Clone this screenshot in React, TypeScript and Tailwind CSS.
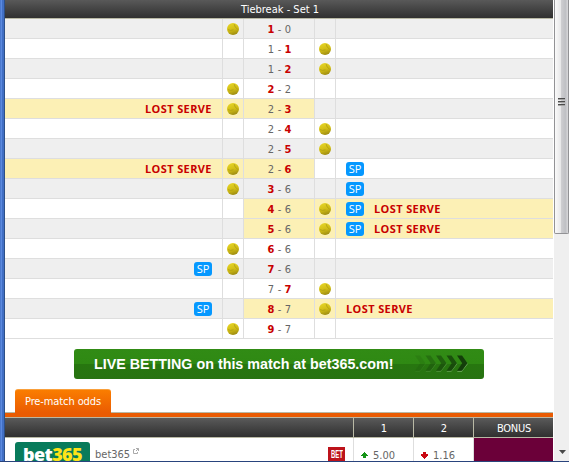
import React from 'react';
import { clsx } from 'clsx';

type Side = 'home' | 'away';

interface Point {
  home: number;
  away: number;
  winner: Side;
  server: Side;
  lost?: boolean;
  sp?: Side;
}

const points: Point[] = [
  { home: 1, away: 0, winner: 'home', server: 'home' },
  { home: 1, away: 1, winner: 'away', server: 'away' },
  { home: 1, away: 2, winner: 'away', server: 'away' },
  { home: 2, away: 2, winner: 'home', server: 'home' },
  { home: 2, away: 3, winner: 'away', server: 'home', lost: true },
  { home: 2, away: 4, winner: 'away', server: 'away' },
  { home: 2, away: 5, winner: 'away', server: 'away' },
  { home: 2, away: 6, winner: 'away', server: 'home', lost: true, sp: 'away' },
  { home: 3, away: 6, winner: 'home', server: 'home', sp: 'away' },
  { home: 4, away: 6, winner: 'home', server: 'away', lost: true, sp: 'away' },
  { home: 5, away: 6, winner: 'home', server: 'away', lost: true, sp: 'away' },
  { home: 6, away: 6, winner: 'home', server: 'home' },
  { home: 7, away: 6, winner: 'home', server: 'home', sp: 'home' },
  { home: 7, away: 7, winner: 'away', server: 'away' },
  { home: 8, away: 7, winner: 'home', server: 'away', lost: true, sp: 'home' },
  { home: 9, away: 7, winner: 'home', server: 'home' },
];

const Ball = () => (
  <svg width="12" height="12" viewBox="0 0 12 12">
    <defs>
      <linearGradient id="ball" x1="0.3" y1="0" x2="0.6" y2="1">
        <stop offset="0" stopColor="#e6d526" />
        <stop offset="0.55" stopColor="#d0bc14" />
        <stop offset="1" stopColor="#9b8a12" />
      </linearGradient>
    </defs>
    <circle cx="6" cy="6" r="6" fill="url(#ball)" />
    <path d="M7.2 1.2Q7.5 4 10.8 6.5M1 6.7Q3.5 8 6.5 6.8" fill="none" stroke="#ab9a16" strokeWidth="0.8" />
  </svg>
);

const SetPoint = () => (
  <span className="h-[14px] w-[18px] rounded-[3px] bg-[#0598ff] text-center font-['Open_Sans',sans-serif] text-[11px] font-medium leading-[14px] text-white [font-stretch:normal]">
    SP
  </span>
);

const LostServe = () => (
  <span className="w-[67px] whitespace-nowrap font-['Open_Sans',sans-serif] text-[11px] font-bold leading-[18px] tracking-[0.38px] text-[#c80000] [font-stretch:normal]">
    LOST SERVE
  </span>
);

const Score = ({ value, won }: { value: number; won: boolean }) => (
  <span className={clsx('w-[7px] text-center', won ? 'font-bold text-[#c80000]' : 'text-[#666]')}>{value}</span>
);

const PointRow = ({ point, odd }: { point: Point; odd: boolean }) => {
  const { home, away, winner, server, lost, sp } = point;
  const homeLost = lost && server === 'home';
  const awayLost = lost && server === 'away';
  const base = odd ? 'bg-[#efefef]' : 'bg-white';
  const cell = 'flex h-5 items-center border-b border-[#dedede] leading-[18px]';
  const hl = 'bg-[#fcf0b5]';

  return (
    <div className="grid grid-cols-[218px_21px_71px_21px_217px]">
      <div className={clsx(cell, 'justify-end border-r pr-[10px] pt-px', homeLost ? hl : base)}>
        {sp === 'home' && <SetPoint />}
        {homeLost && <LostServe />}
      </div>
      <div className={clsx(cell, 'border-r pl-1 pt-px', homeLost ? hl : base)}>{server === 'home' && <Ball />}</div>
      <div className={clsx(cell, 'justify-center gap-[3px] border-r pl-px pt-[3px]', lost ? hl : base)}>
        <Score value={home} won={winner === 'home'} />
        <span className="w-1 text-center text-[#666]">-</span>
        <Score value={away} won={winner === 'away'} />
      </div>
      <div className={clsx(cell, 'border-r pl-1 pt-px', awayLost ? hl : base)}>{server === 'away' && <Ball />}</div>
      <div className={clsx(cell, 'gap-[10px] pl-[10px] pt-px', awayLost ? hl : base)}>
        {sp === 'away' && <SetPoint />}
        {awayLost && <LostServe />}
      </div>
    </div>
  );
};

const Chevrons = () => (
  <svg width="54" height="18" viewBox="0 0 54 18">
    {[0.12, 0.3, 0.5, 0.7, 0.92].map((opacity, i) => (
      <g key={opacity} transform={`translate(${i * 10.5} 0)`} opacity={opacity}>
        <path d="M0 16.8H4.8L10.8 9L9.8 7.7L3.9 15.8H0.8Z" fill="#7bb568" />
        <path d="M0 0.5H5L10.5 8.2L5 15.8H0L5.2 8.2Z" fill="#12390a" />
      </g>
    ))}
  </svg>
);

const BetBanner = () => (
  <div className="ml-[69px] mt-[10px] flex h-[30px] w-[410px] items-center rounded-[3px] bg-[linear-gradient(#318b15_0,#2f8913_50%,#27760f_50%,#287312_100%)] pl-5">
    <span className="w-[321px] whitespace-nowrap pt-px font-['Liberation_Sans',Arial,sans-serif] text-[14.3px] font-bold text-white">
      LIVE BETTING on this match at bet365.com!
    </span>
    <Chevrons />
  </div>
);

const Arrow = ({ up }: { up?: boolean }) => (
  <svg width="7" height="7" viewBox="0 0 7 7" shapeRendering="crispEdges">
    <path
      d={up ? 'M3 0H4V1H5V2H6V3H7V4H5V6H2V4H0V3H1V2H2V1H3Z' : 'M2 0H5V2H7V4H6V5H5V6H4V7H3V6H2V5H1V4H0V2H2Z'}
      fill={up ? '#159417' : '#c90812'}
    />
  </svg>
);

const PreMatchOdds = () => (
  <div className="mt-[10px]">
    <div className="flex h-6 border-b border-[#b9b9a5]">
      <div className="ml-[10px] h-6 w-24 shrink-0 rounded-t-[3px] border-t border-[#f9a03c] bg-linear-to-b from-[#fa7d00] to-[#ea5b02] text-center text-[11px] leading-[23px] tracking-[-0.1px] text-white">
        Pre-match odds
      </div>
    </div>
    <div className="h-[5px] border-b border-[#bdb6a0] bg-[#ea5b02]" />
    <div className="grid h-5 grid-cols-[348px_60px_60px_80px] border-b border-[#b9b9a5] bg-linear-to-b from-[#5a5a5a] to-[#303030] text-[11px] leading-[21px] text-white">
      <div />
      <div className="border-l border-[#b9b9a5] pl-px text-center">1</div>
      <div className="border-l border-[#b9b9a5] pl-px text-center">2</div>
      <div className="border-l border-[#b9b9a5] pl-px text-center tracking-[-0.3px]">BONUS</div>
    </div>
    <div className="grid h-[34px] grid-cols-[348px_60px_60px_80px] text-[11px] text-[#666]">
      <div className="flex items-start pl-[10px] pt-1">
        <div className="flex h-[25px] w-[75px] justify-center rounded-[3px] bg-[#087b5b] pt-[2px] font-['Open_Sans',sans-serif] text-[18px] font-extrabold leading-5 tracking-[-0.6px] text-white [font-stretch:normal]">
          bet<span className="text-[#ffe418]">365</span>
        </div>
        <span className="ml-[5px] mt-[5px] leading-4">bet365</span>
        <svg className="ml-[3px] mt-[6px]" width="6" height="6" viewBox="0 0 6 6" fill="none" stroke="#aaa">
          <path d="M2 1.5H.5V5.5H4.5V4M3 .5H5.5V3M5.5 .5L3 3" />
        </svg>
        <div className="ml-auto mr-2 mt-[5px] flex h-[18px] w-[17px] justify-center bg-[#bd131b] text-[10px] leading-[16px] text-white">
          <span className="scale-x-[0.6] font-['Liberation_Sans',sans-serif] font-bold">BET</span>
        </div>
      </div>
      <div className="flex h-[34px] items-center gap-[5px] border-l border-[#dedede] pl-[7px]">
        <Arrow up />
        <span className="pt-[2px]">5.00</span>
      </div>
      <div className="flex h-[34px] items-center gap-[5px] border-l border-[#dedede] pl-[7px]">
        <Arrow />
        <span className="pt-[2px]">1.16</span>
      </div>
      <div className="border-l border-[#dedede] bg-[#6b0039]" />
    </div>
  </div>
);

const ScrollBar = () => (
  <div className="ml-px flex w-[15px] flex-col justify-between bg-[#efefef]">
    <div className="flex h-[234px] flex-col items-center rounded-b-[2px] border-x border-b border-[#929295] bg-[linear-gradient(90deg,#fafafa_0,#e7e7e8_45%,#cdcdd0_50%,#bfc0c4_80%,#d8d8da_100%)] pt-[98px]">
      <svg width="7" height="9" viewBox="0 0 7 9" shapeRendering="crispEdges">
        <path d="M0 .5H7M0 3.5H7M0 6.5H7" stroke="#4c4c4c" />
        <path d="M0 1.5H7M0 4.5H7M0 7.5H7" stroke="#a5a5a5" />
      </svg>
    </div>
    <svg className="mb-[7px] ml-[5px]" width="7" height="4" viewBox="0 0 7 4">
      <path d="M0 0H7L3.5 4Z" fill="#484848" />
    </svg>
  </div>
);

export default function App() {
  return (
    <div className="flex h-[462px] w-[571px] flex-col overflow-hidden bg-white font-['DejaVu_Sans_Condensed','DejaVu_Sans',sans-serif] text-[11px] [font-stretch:condensed]">
      <div className="flex h-[461px] shrink-0 overflow-hidden">
        <div className="w-[5px] shrink-0 bg-[linear-gradient(90deg,#4c79ce_0_1px,#5b8ae0_1px_2px,#416fc4_2px_4px,#2d5088_4px)]" />
        <main className="w-[548px] shrink-0">
          <div className="h-[19px] border-b border-[#b9b9a5] bg-linear-to-b from-[#595959] to-[#303030] pl-0.5 text-center text-[11px] leading-[19px] text-white">
            Tiebreak - Set 1
          </div>
          {points.map((point, i) => (
            <PointRow key={i} point={point} odd={i % 2 === 0} />
          ))}
          <BetBanner />
          <PreMatchOdds />
        </main>
        <ScrollBar />
      </div>
      <div className="h-px w-[569px] shrink-0 bg-[#29447d]" />
    </div>
  );
}
